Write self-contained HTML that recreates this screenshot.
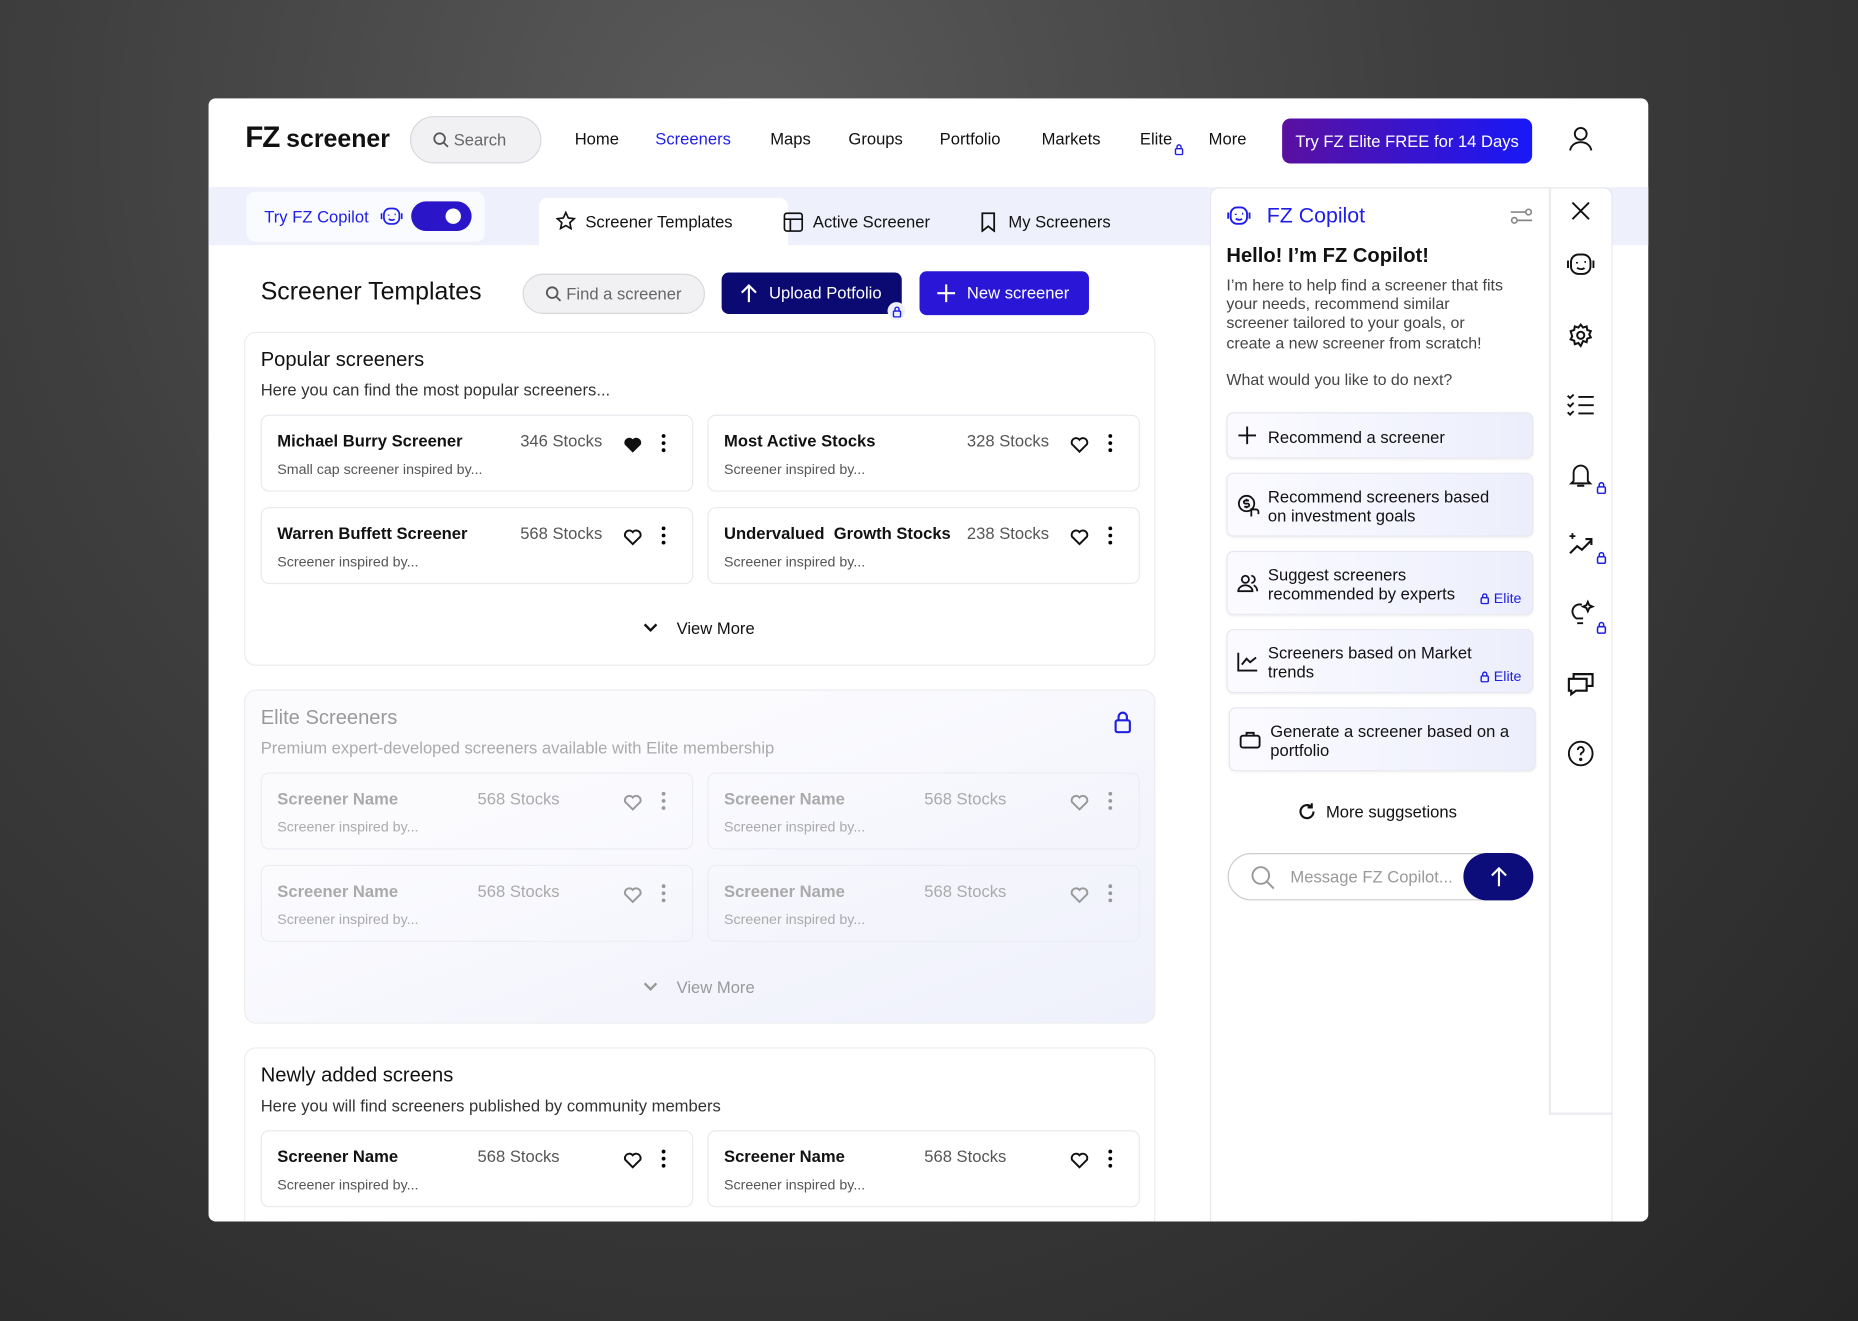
<!DOCTYPE html>
<html><head><meta charset="utf-8"><style>
*{box-sizing:border-box;margin:0;padding:0}
html,body{width:1858px;height:1321px;overflow:hidden;background:#3a3a3a}
body{font-family:"Liberation Sans",Arial,sans-serif;color:#111}
#bg{position:absolute;left:0;top:0;width:1858px;height:1321px;background:radial-gradient(ellipse at 40% 10%,#5a5a5a 0%,#3e3e3e 45%,#262626 100%)}
#w{position:absolute;left:0;top:0;width:1568px;height:1115px;transform:scale(1.18495,1.18475);transform-origin:0 0}
.a{position:absolute}
.card{left:176px;top:83px;width:1215px;height:948px;background:#fff;border-radius:6px;overflow:hidden}
.nav{top:109px;font-size:14px;color:#111}
.sec{background:#fff;border:1.5px solid #ececf0;border-radius:10px}
.item{background:#fff;border:1.5px solid #e9e9ee;border-radius:7px;width:365px;height:65px}
.item b{position:absolute;left:13px;top:13px;font-size:14px}
.item .s{position:absolute;left:13px;top:38px;font-size:12px;color:#555}
.item .n{position:absolute;left:218px;top:13px;font-size:14px;color:#555}
.item svg{position:absolute}
.g b,.g .n,.g .s{color:#aaa}
.g{background:transparent;border-color:#ececf3}
.opt{left:1035px;width:259px;background:linear-gradient(90deg,#fbfbff,#eceefc);border:1.5px solid #e6e7f0;border-radius:6px;font-size:14px;color:#111;box-shadow:0 1px 2px rgba(0,0,0,.06)}
.opt .t{position:absolute;left:34px;line-height:16px}
.opt .el{position:absolute;right:9px;bottom:6px;color:#2020e0;font-size:12px;line-height:14px}
.si{left:1322px;width:24px;height:24px}
.lk{position:absolute}
</style></head><body><div id="bg"></div>
<div id="w">
<div class="a card"></div>
<!-- header -->
<div class="a" style="left:207px;top:102px;font-size:25px;font-weight:bold;letter-spacing:-1px">FZ <span style="font-size:21px;letter-spacing:0">screener</span></div>
<div class="a" style="left:346px;top:98px;width:111px;height:40px;border:1.5px solid #d8d8dc;background:#f1f1f3;border-radius:20px;font-size:14px;color:#666;padding:11px 0 0 18px"><svg width="14" height="14" viewBox="0 0 14 14" style="vertical-align:-2px"><circle cx="6" cy="6" r="4.5" fill="none" stroke="#555" stroke-width="1.5"/><path d="M9.5 9.5L13 13" stroke="#555" stroke-width="1.5"/></svg> Search</div>
<div class="a nav" style="left:485px">Home</div>
<div class="a nav" style="left:553px;color:#1e1ee6">Screeners</div>
<div class="a nav" style="left:650px">Maps</div>
<div class="a nav" style="left:716px">Groups</div>
<div class="a nav" style="left:793px">Portfolio</div>
<div class="a nav" style="left:879px">Markets</div>
<div class="a nav" style="left:962px">Elite</div>
<svg class="a" style="left:991px;top:121px" width="8" height="10" viewBox="0 0 8 10" fill="none" stroke="#2020e0" stroke-width="1.2"><rect x="1" y="4.5" width="6" height="5" rx="1"/><path d="M2.3 4.5V3a1.7 1.7 0 0 1 3.4 0v1.5"/></svg>
<div class="a nav" style="left:1020px">More</div>
<div class="a" style="left:1082px;top:100px;width:211px;height:38px;border-radius:7px;background:linear-gradient(90deg,#5a10a0,#1818f8);color:#fff;font-size:14px;text-align:center;line-height:38px">Try FZ Elite FREE for 14 Days</div>
<svg class="a" style="left:1322px;top:105px" width="24" height="24" viewBox="0 0 24 24" fill="none" stroke="#111" stroke-width="1.6"><circle cx="12" cy="8" r="5"/><path d="M3 22c1-5 5-7 9-7s8 2 9 7"/></svg>
<!-- band -->
<div class="a" style="left:176px;top:158px;width:1215px;height:49px;background:#eef0fc"></div>
<div class="a" style="left:208px;top:162px;width:201px;height:42px;background:#fafbff;border-radius:7px"></div>
<div class="a" style="left:223px;top:175px;font-size:14px;color:#1e1ee6">Try FZ Copilot</div>
<svg class="a" style="left:321px;top:174px" width="19" height="17" viewBox="0 0 19 17" fill="none" stroke="#1e1ee6" stroke-width="1.4"><rect x="3" y="2" width="13" height="13" rx="5"/><path d="M1 6v5M18 6v5M7 7v1M12 7h1M7 11c2 1 4 1 5 0"/></svg>
<div class="a" style="left:347px;top:170px;width:51px;height:25px;border-radius:13px;background:#2a16c8"></div>
<div class="a" style="left:376px;top:176px;width:13px;height:13px;border-radius:50%;background:#fff"></div>
<div class="a" style="left:455px;top:167px;width:210px;height:40px;background:#fff;border-radius:7px 7px 0 0"></div>
<svg class="a" style="left:469px;top:178px" width="17" height="17" viewBox="0 0 24 24" fill="none" stroke="#111" stroke-width="2"><path d="M12 2l3 6.5 7 .8-5.2 4.8 1.4 7L12 17.5 5.8 21l1.4-7L2 9.3l7-.8z"/></svg>
<div class="a" style="left:494px;top:179px;font-size:14px">Screener Templates</div>
<svg class="a" style="left:661px;top:179px" width="17" height="17" viewBox="0 0 17 17" fill="none" stroke="#111" stroke-width="1.4"><rect x="1" y="1" width="15" height="15" rx="2"/><path d="M1 6h15M6 6v10"/></svg>
<div class="a" style="left:686px;top:179px;font-size:14px">Active Screener</div>
<svg class="a" style="left:827px;top:179px" width="14" height="17" viewBox="0 0 14 17" fill="none" stroke="#111" stroke-width="1.5"><path d="M2 1h10v15l-5-4-5 4z"/></svg>
<div class="a" style="left:851px;top:179px;font-size:14px">My Screeners</div>
<!-- title row -->
<div class="a" style="left:220px;top:235px;font-size:21px">Screener Templates</div>
<div class="a" style="left:441px;top:231px;width:154px;height:34px;border:1.5px solid #d8d8dc;background:#f1f1f3;border-radius:17px;font-size:14px;color:#666;padding:8px 0 0 18px"><svg width="14" height="14" viewBox="0 0 14 14" style="vertical-align:-2px"><circle cx="6" cy="6" r="4.5" fill="none" stroke="#555" stroke-width="1.5"/><path d="M9.5 9.5L13 13" stroke="#555" stroke-width="1.5"/></svg> Find a screener</div>
<div class="a" style="left:609px;top:230px;width:152px;height:35px;background:#0a0a72;border-radius:6px;color:#fff;font-size:14px;line-height:35px;padding-left:40px">Upload Potfolio</div>
<svg class="a" style="left:625px;top:239px" width="14" height="17" viewBox="0 0 14 17" fill="none" stroke="#fff" stroke-width="1.8"><path d="M7 16V2M1 8l6-6 6 6"/></svg>
<div class="a" style="left:749px;top:255px;width:15px;height:15px;border-radius:50%;background:#eef0fc"></div>
<svg class="a" style="left:752.5px;top:257.5px" width="8" height="10" viewBox="0 0 8 10" fill="none" stroke="#2020e0" stroke-width="1.2"><rect x="1" y="4.5" width="6" height="5" rx="1"/><path d="M2.3 4.5V3a1.7 1.7 0 0 1 3.4 0v1.5"/></svg>
<div class="a" style="left:776px;top:229px;width:143px;height:37px;background:#2a16d6;border-radius:6px;color:#fff;font-size:14px;line-height:37px;padding-left:40px">New screener</div>
<svg class="a" style="left:790px;top:239px" width="17" height="17" viewBox="0 0 17 17" stroke="#fff" stroke-width="1.8"><path d="M8.5 1v15M1 8.5h15"/></svg>
<!-- popular -->
<div class="a sec" style="left:206px;top:280px;width:769px;height:282px"></div>
<div class="a" style="left:220px;top:294px;font-size:17px">Popular screeners</div>
<div class="a" style="left:220px;top:321px;font-size:14px;color:#333">Here you can find the most popular screeners...</div>
<div class="a item" style="left:220px;top:350px"><b>Michael Burry Screener</b><span class="n">346 Stocks</span><span class="s">Small cap screener inspired by...</span>
<svg style="left:304px;top:15px" width="18" height="17" viewBox="0 0 24 22"><path d="M12 21L3 12a5.5 5.5 0 0 1 9-6 5.5 5.5 0 0 1 9 6z" fill="#111"/></svg><svg style="left:336px;top:14px" width="6" height="18"><circle cx="3" cy="3" r="1.6"/><circle cx="3" cy="9" r="1.6"/><circle cx="3" cy="15" r="1.6"/></svg></div>
<div class="a item" style="left:597px;top:350px"><b>Most Active Stocks</b><span class="n">328 Stocks</span><span class="s">Screener inspired by...</span>
<svg style="left:304px;top:15px" width="18" height="17" viewBox="0 0 24 22"><path d="M12 20L3.5 11.5a5 5 0 0 1 8.5-5 5 5 0 0 1 8.5 5z" fill="none" stroke="#111" stroke-width="2.2"/></svg><svg style="left:336px;top:14px" width="6" height="18"><circle cx="3" cy="3" r="1.6"/><circle cx="3" cy="9" r="1.6"/><circle cx="3" cy="15" r="1.6"/></svg></div>
<div class="a item" style="left:220px;top:428px"><b>Warren Buffett Screener</b><span class="n">568 Stocks</span><span class="s">Screener inspired by...</span>
<svg style="left:304px;top:15px" width="18" height="17" viewBox="0 0 24 22"><path d="M12 20L3.5 11.5a5 5 0 0 1 8.5-5 5 5 0 0 1 8.5 5z" fill="none" stroke="#111" stroke-width="2.2"/></svg><svg style="left:336px;top:14px" width="6" height="18"><circle cx="3" cy="3" r="1.6"/><circle cx="3" cy="9" r="1.6"/><circle cx="3" cy="15" r="1.6"/></svg></div>
<div class="a item" style="left:597px;top:428px"><b>Undervalued&nbsp; Growth Stocks</b><span class="n">238 Stocks</span><span class="s">Screener inspired by...</span>
<svg style="left:304px;top:15px" width="18" height="17" viewBox="0 0 24 22"><path d="M12 20L3.5 11.5a5 5 0 0 1 8.5-5 5 5 0 0 1 8.5 5z" fill="none" stroke="#111" stroke-width="2.2"/></svg><svg style="left:336px;top:14px" width="6" height="18"><circle cx="3" cy="3" r="1.6"/><circle cx="3" cy="9" r="1.6"/><circle cx="3" cy="15" r="1.6"/></svg></div>
<svg class="a" style="left:543px;top:526px" width="12" height="8"><path d="M1 1l5 5 5-5" fill="none" stroke="#111" stroke-width="2"/></svg>
<div class="a" style="left:571px;top:522px;font-size:14px">View More</div>
<!-- elite -->
<div class="a sec" style="left:206px;top:582px;width:769px;height:282px;background:linear-gradient(160deg,#fbfbfe 30%,#eef0fb 100%)"></div>
<div class="a" style="left:220px;top:596px;font-size:17px;color:#999">Elite Screeners</div>
<div class="a" style="left:220px;top:623px;font-size:14px;color:#aaa">Premium expert-developed screeners available with Elite membership</div>
<svg class="a" style="left:940px;top:600px" width="15" height="19" viewBox="0 0 15 19" fill="none" stroke="#2020e0" stroke-width="1.8"><rect x="1.5" y="8" width="12" height="10" rx="1.5"/><path d="M4 8V5a3.5 3.5 0 0 1 7 0v3"/></svg>
<div class="a item g" style="left:220px;top:652px"><b>Screener Name</b><span class="n" style="left:182px">568 Stocks</span><span class="s">Screener inspired by...</span>
<svg style="left:304px;top:15px" width="18" height="17" viewBox="0 0 24 22"><path d="M12 20L3.5 11.5a5 5 0 0 1 8.5-5 5 5 0 0 1 8.5 5z" fill="none" stroke="#999" stroke-width="2.2"/></svg><svg style="left:336px;top:14px" width="6" height="18" fill="#999"><circle cx="3" cy="3" r="1.6"/><circle cx="3" cy="9" r="1.6"/><circle cx="3" cy="15" r="1.6"/></svg></div>
<div class="a item g" style="left:597px;top:652px"><b>Screener Name</b><span class="n" style="left:182px">568 Stocks</span><span class="s">Screener inspired by...</span>
<svg style="left:304px;top:15px" width="18" height="17" viewBox="0 0 24 22"><path d="M12 20L3.5 11.5a5 5 0 0 1 8.5-5 5 5 0 0 1 8.5 5z" fill="none" stroke="#999" stroke-width="2.2"/></svg><svg style="left:336px;top:14px" width="6" height="18" fill="#999"><circle cx="3" cy="3" r="1.6"/><circle cx="3" cy="9" r="1.6"/><circle cx="3" cy="15" r="1.6"/></svg></div>
<div class="a item g" style="left:220px;top:730px"><b>Screener Name</b><span class="n" style="left:182px">568 Stocks</span><span class="s">Screener inspired by...</span>
<svg style="left:304px;top:15px" width="18" height="17" viewBox="0 0 24 22"><path d="M12 20L3.5 11.5a5 5 0 0 1 8.5-5 5 5 0 0 1 8.5 5z" fill="none" stroke="#999" stroke-width="2.2"/></svg><svg style="left:336px;top:14px" width="6" height="18" fill="#999"><circle cx="3" cy="3" r="1.6"/><circle cx="3" cy="9" r="1.6"/><circle cx="3" cy="15" r="1.6"/></svg></div>
<div class="a item g" style="left:597px;top:730px"><b>Screener Name</b><span class="n" style="left:182px">568 Stocks</span><span class="s">Screener inspired by...</span>
<svg style="left:304px;top:15px" width="18" height="17" viewBox="0 0 24 22"><path d="M12 20L3.5 11.5a5 5 0 0 1 8.5-5 5 5 0 0 1 8.5 5z" fill="none" stroke="#999" stroke-width="2.2"/></svg><svg style="left:336px;top:14px" width="6" height="18" fill="#999"><circle cx="3" cy="3" r="1.6"/><circle cx="3" cy="9" r="1.6"/><circle cx="3" cy="15" r="1.6"/></svg></div>
<svg class="a" style="left:543px;top:829px" width="12" height="8"><path d="M1 1l5 5 5-5" fill="none" stroke="#999" stroke-width="2"/></svg>
<div class="a" style="left:571px;top:825px;font-size:14px;color:#999">View More</div>
<!-- newly -->
<div class="a" style="left:176px;top:870px;width:845px;height:161px;overflow:hidden">
<div class="a sec" style="left:30px;top:14px;width:769px;height:200px"></div>
<div class="a" style="left:44px;top:28px;font-size:17px">Newly added screens</div>
<div class="a" style="left:44px;top:55px;font-size:14px;color:#333">Here you will find screeners published by community members</div>
<div class="a item" style="left:44px;top:84px"><b>Screener Name</b><span class="n" style="left:182px">568 Stocks</span><span class="s">Screener inspired by...</span>
<svg style="left:304px;top:15px" width="18" height="17" viewBox="0 0 24 22"><path d="M12 20L3.5 11.5a5 5 0 0 1 8.5-5 5 5 0 0 1 8.5 5z" fill="none" stroke="#111" stroke-width="2.2"/></svg><svg style="left:336px;top:14px" width="6" height="18"><circle cx="3" cy="3" r="1.6"/><circle cx="3" cy="9" r="1.6"/><circle cx="3" cy="15" r="1.6"/></svg></div>
<div class="a item" style="left:421px;top:84px"><b>Screener Name</b><span class="n" style="left:182px">568 Stocks</span><span class="s">Screener inspired by...</span>
<svg style="left:304px;top:15px" width="18" height="17" viewBox="0 0 24 22"><path d="M12 20L3.5 11.5a5 5 0 0 1 8.5-5 5 5 0 0 1 8.5 5z" fill="none" stroke="#111" stroke-width="2.2"/></svg><svg style="left:336px;top:14px" width="6" height="18"><circle cx="3" cy="3" r="1.6"/><circle cx="3" cy="9" r="1.6"/><circle cx="3" cy="15" r="1.6"/></svg></div>
</div>
<!-- copilot panel -->
<div class="a" style="left:1021px;top:158px;width:340px;height:873px;background:#fff;border:1.5px solid #e6e6ea;border-bottom:none;border-radius:8px 8px 0 0"></div>
<div class="a" style="left:1307px;top:159px;width:1.5px;height:781px;background:#ececf0"></div>
<div class="a" style="left:1307px;top:939px;width:53px;height:1.5px;background:#ececf0"></div>
<svg class="a" style="left:1035px;top:173px" width="21" height="18" viewBox="0 0 19 17" fill="none" stroke="#1e1ee6" stroke-width="1.5"><rect x="3" y="2" width="13" height="13" rx="5"/><path d="M1 6v5M18 6v5M7 7v1M12 7h1M7 11c2 1 4 1 5 0"/></svg>
<div class="a" style="left:1069px;top:172px;font-size:18px;color:#1e1ee6">FZ Copilot</div>
<svg class="a" style="left:1274px;top:175px" width="20" height="15" viewBox="0 0 20 15" fill="none" stroke="#888" stroke-width="1.4"><path d="M1 4h13M6 11h13"/><circle cx="16" cy="4" r="2.3" fill="#fff"/><circle cx="4" cy="11" r="2.3" fill="#fff"/></svg>
<div class="a" style="left:1035px;top:206px;font-size:17px;font-weight:bold">Hello! I’m FZ Copilot!</div>
<div class="a" style="left:1035px;top:233px;font-size:13.5px;line-height:16.2px;color:#444;width:240px">I’m here to help find a screener that fits your needs, recommend similar screener tailored to your goals, or create a new screener from scratch!</div>
<div class="a" style="left:1035px;top:313px;font-size:13.5px;color:#444">What would you like to do next?</div>
<div class="a opt" style="top:348px;height:39px"><svg style="position:absolute;left:9px;top:11px" width="15" height="15" stroke="#111" stroke-width="1.6"><path d="M7.5 0v15M0 7.5h15"/></svg><span class="t" style="top:12px">Recommend a screener</span></div>
<div class="a opt" style="top:399px;height:54px"><svg style="position:absolute;left:8px;top:17px" width="20" height="20" viewBox="0 0 20 20" fill="none" stroke="#111" stroke-width="1.5"><circle cx="8" cy="8" r="6.5"/><path d="M10 5.5H7a1.3 1.3 0 0 0 0 2.6h2a1.3 1.3 0 0 1 0 2.6H6M8 4v1.5M8 10.7V12M12 12v7M12 13h4a2 2 0 0 1 2 2v2"/></svg><span class="t" style="top:11px">Recommend screeners based<br>on investment goals</span></div>
<div class="a opt" style="top:465px;height:54px"><svg style="position:absolute;left:8px;top:19px" width="18" height="15" viewBox="0 0 18 15" fill="none" stroke="#111" stroke-width="1.5"><circle cx="7" cy="4" r="3"/><path d="M1 14c0-3 3-5 6-5s6 2 6 5zM12 1a3 3 0 0 1 0 6M14 9c2 1 3 3 3 5"/></svg><span class="t" style="top:11px">Suggest screeners<br>recommended by experts</span><span class="el"><svg width="8" height="10" viewBox="0 0 8 10" fill="none" stroke="#2020e0" stroke-width="1.2" style="vertical-align:-1px"><rect x="1" y="4.5" width="6" height="5" rx="1"/><path d="M2.3 4.5V3a1.7 1.7 0 0 1 3.4 0v1.5"/></svg> Elite</span></div>
<div class="a opt" style="top:531px;height:54px"><svg style="position:absolute;left:8px;top:18px" width="18" height="17" viewBox="0 0 18 17" fill="none" stroke="#111" stroke-width="1.6"><path d="M1 1v15h16M4 11l4-5 3 3 5-4"/></svg><span class="t" style="top:11px">Screeners based on Market<br>trends</span><span class="el"><svg width="8" height="10" viewBox="0 0 8 10" fill="none" stroke="#2020e0" stroke-width="1.2" style="vertical-align:-1px"><rect x="1" y="4.5" width="6" height="5" rx="1"/><path d="M2.3 4.5V3a1.7 1.7 0 0 1 3.4 0v1.5"/></svg> Elite</span></div>
<div class="a opt" style="top:597px;height:54px;left:1037px"><svg style="position:absolute;left:8px;top:19px" width="18" height="15" viewBox="0 0 18 15" fill="none" stroke="#111" stroke-width="1.6"><rect x="1" y="4" width="16" height="10" rx="2"/><path d="M6 4V1.5h6V4"/></svg><span class="t" style="top:11px">Generate a screener based on a<br>portfolio</span></div>
<svg class="a" style="left:1095px;top:677px" width="16" height="16" viewBox="0 0 16 16" fill="none" stroke="#111" stroke-width="1.8"><path d="M13.5 8A5.5 5.5 0 1 1 11.5 3.8"/><path d="M12 1v3.5H8.5"/></svg>
<div class="a" style="left:1119px;top:677px;font-size:14px">More suggsetions</div>
<div class="a" style="left:1036px;top:720px;width:257px;height:40px;border:1.5px solid #ccc;border-radius:20px"></div>
<svg class="a" style="left:1055px;top:730px" width="22" height="22" viewBox="0 0 22 22" fill="none" stroke="#999" stroke-width="1.6"><circle cx="9" cy="9" r="7"/><path d="M14 14l6 6"/></svg>
<div class="a" style="left:1089px;top:732px;font-size:14px;color:#999">Message FZ Copilot...</div>
<div class="a" style="left:1235px;top:720px;width:59px;height:40px;border-radius:20px;background:#0c0c7a"></div>
<svg class="a" style="left:1258px;top:731px" width="14" height="18" viewBox="0 0 14 18" fill="none" stroke="#fff" stroke-width="1.8"><path d="M7 17V2M1 8l6-6 6 6"/></svg>
<!-- sidebar icons -->
<svg class="a si" style="top:166px" viewBox="0 0 24 24" fill="none" stroke="#111" stroke-width="1.6"><path d="M5 5l14 14M19 5L5 19"/></svg>
<svg class="a si" style="top:211px" viewBox="0 0 19 17" fill="none" stroke="#111" stroke-width="1.3"><rect x="3" y="2" width="13" height="13" rx="5"/><path d="M1 6v5M18 6v5M7 7v1M12 7h1M7 11c2 1 4 1 5 0"/></svg>
<svg class="a si" style="top:271px" viewBox="0 0 24 24" fill="none" stroke="#111" stroke-width="1.7"><circle cx="12" cy="12" r="3"/><path d="M12 3l2 2.5 3-1 .5 3 3 1-1.3 2.7 1.3 2.6-3 1-.5 3-3-1L12 21l-2-2.5-3 1-.5-3-3-1 1.3-2.6L3.5 8.5l3-1 .5-3 3 1z"/></svg>
<svg class="a si" style="top:330px" viewBox="0 0 24 24" fill="none" stroke="#111" stroke-width="1.6"><path d="M10 5h13M10 12h13M10 19h13M1 4l2 2 3-3M1 11l2 2 3-3M1 18l2 2 3-3"/></svg>
<svg class="a si" style="top:389px" viewBox="0 0 24 24" fill="none" stroke="#111" stroke-width="1.6"><path d="M6 17V10a6 6 0 0 1 12 0v7l2 2H4zM9 21h6"/></svg>
<svg class="lk" style="left:1347px;top:406px" width="9" height="11" viewBox="0 0 8 10" fill="none" stroke="#2020e0" stroke-width="1.2"><rect x="1" y="4.5" width="6" height="5" rx="1"/><path d="M2.3 4.5V3a1.7 1.7 0 0 1 3.4 0v1.5"/></svg>
<svg class="a si" style="top:448px" viewBox="0 0 24 24" fill="none" stroke="#111" stroke-width="1.8"><path d="M3 19l6-6 4 3 8-8M16 7h5v5"/><path d="M5 2v5M2.5 4.5h5" stroke-width="1.5"/></svg>
<svg class="lk" style="left:1347px;top:465px" width="9" height="11" viewBox="0 0 8 10" fill="none" stroke="#2020e0" stroke-width="1.2"><rect x="1" y="4.5" width="6" height="5" rx="1"/><path d="M2.3 4.5V3a1.7 1.7 0 0 1 3.4 0v1.5"/></svg>
<svg class="a si" style="top:506px" viewBox="0 0 24 24" fill="none" stroke="#111" stroke-width="1.6"><path d="M9 20h5M8 16c-2-2-3-4-3-6a6 6 0 0 1 8-5.5M8 16h6"/><path d="M18 2l1.2 2.8L22 6l-2.8 1.2L18 10l-1.2-2.8L14 6l2.8-1.2z"/></svg>
<svg class="lk" style="left:1347px;top:524px" width="9" height="11" viewBox="0 0 8 10" fill="none" stroke="#2020e0" stroke-width="1.2"><rect x="1" y="4.5" width="6" height="5" rx="1"/><path d="M2.3 4.5V3a1.7 1.7 0 0 1 3.4 0v1.5"/></svg>
<svg class="a si" style="top:565px" viewBox="0 0 24 24" fill="none" stroke="#111" stroke-width="1.8"><path d="M2 8h15v10H8l-4 3v-3H2zM6 8V4h16v10h-5"/></svg>
<svg class="a si" style="top:624px" viewBox="0 0 24 24" fill="none" stroke="#111" stroke-width="1.6"><circle cx="12" cy="12" r="10"/><path d="M9.5 9a2.5 2.5 0 1 1 3.5 2.3c-.8.4-1 1-1 1.7v.5"/><circle cx="12" cy="17" r=".6" fill="#111"/></svg>
</div>
</body></html>
